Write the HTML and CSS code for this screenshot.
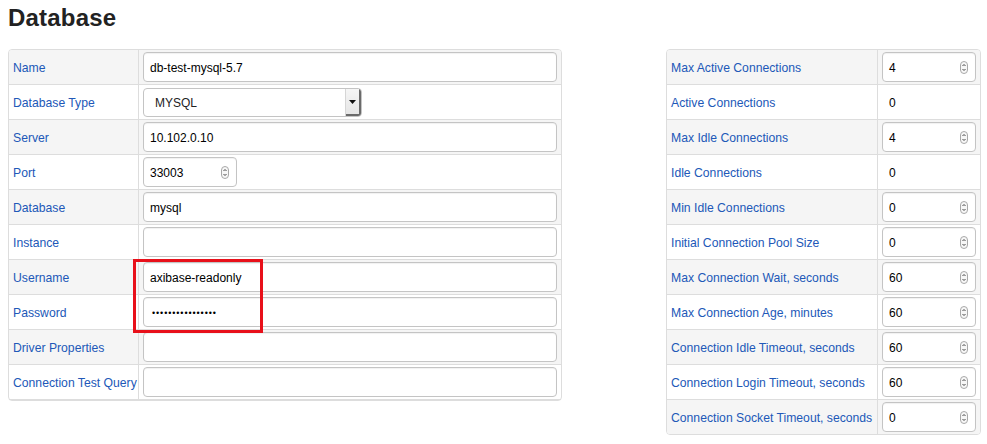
FILE: index.html
```html
<!DOCTYPE html>
<html>
<head>
<meta charset="utf-8">
<link rel="stylesheet" href="styles.css">
</head>
<body>
<h1 class="title">Database</h1>
<div class="panels">
  <div class="table table-left">
    <div class="row"><div class="label">Name</div><div class="cell"><div class="field">db-test-mysql-5.7</div></div></div>
    <div class="row"><div class="label">Database Type</div><div class="cell"><div class="select"><span class="select-text">MYSQL</span><span class="select-btn"><svg width="7" height="4" viewBox="0 0 7 4"><path d="M0 0H7L3.5 4Z" fill="#111"/></svg></span></div></div></div>
    <div class="row"><div class="label">Server</div><div class="cell"><div class="field">10.102.0.10</div></div></div>
    <div class="row"><div class="label">Port</div><div class="cell"><div class="field field-num"><span>33003</span><svg class="spin" width="8" height="13" viewBox="0 0 8 13"><rect x="0.5" y="0.5" width="7" height="12" rx="3.5" fill="#f7f7f7" stroke="#a8a8a8"/><path d="M2.5 5L4 3.5L5.5 5M2.5 8L4 9.5L5.5 8" fill="none" stroke="#444" stroke-width="1"/></svg></div></div></div>
    <div class="row"><div class="label">Database</div><div class="cell"><div class="field">mysql</div></div></div>
    <div class="row"><div class="label">Instance</div><div class="cell"><div class="field"></div></div></div>
    <div class="row"><div class="label">Username</div><div class="cell"><div class="field">axibase-readonly</div></div></div>
    <div class="row"><div class="label">Password</div><div class="cell"><div class="field field-pass">••••••••••••••••</div></div></div>
    <div class="row"><div class="label">Driver Properties</div><div class="cell"><div class="field"></div></div></div>
    <div class="row"><div class="label">Connection Test Query</div><div class="cell"><div class="field"></div></div></div>
    <div class="highlight"></div>
  </div>
  <div class="table table-right">
    <div class="row"><div class="label">Max Active Connections</div><div class="cell"><div class="field field-num"><span>4</span><svg class="spin" width="8" height="13" viewBox="0 0 8 13"><rect x="0.5" y="0.5" width="7" height="12" rx="3.5" fill="#f7f7f7" stroke="#a8a8a8"/><path d="M2.5 5L4 3.5L5.5 5M2.5 8L4 9.5L5.5 8" fill="none" stroke="#444" stroke-width="1"/></svg></div></div></div>
    <div class="row"><div class="label">Active Connections</div><div class="cell"><span class="value">0</span></div></div>
    <div class="row"><div class="label">Max Idle Connections</div><div class="cell"><div class="field field-num"><span>4</span><svg class="spin" width="8" height="13" viewBox="0 0 8 13"><rect x="0.5" y="0.5" width="7" height="12" rx="3.5" fill="#f7f7f7" stroke="#a8a8a8"/><path d="M2.5 5L4 3.5L5.5 5M2.5 8L4 9.5L5.5 8" fill="none" stroke="#444" stroke-width="1"/></svg></div></div></div>
    <div class="row"><div class="label">Idle Connections</div><div class="cell"><span class="value">0</span></div></div>
    <div class="row"><div class="label">Min Idle Connections</div><div class="cell"><div class="field field-num"><span>0</span><svg class="spin" width="8" height="13" viewBox="0 0 8 13"><rect x="0.5" y="0.5" width="7" height="12" rx="3.5" fill="#f7f7f7" stroke="#a8a8a8"/><path d="M2.5 5L4 3.5L5.5 5M2.5 8L4 9.5L5.5 8" fill="none" stroke="#444" stroke-width="1"/></svg></div></div></div>
    <div class="row"><div class="label">Initial Connection Pool Size</div><div class="cell"><div class="field field-num"><span>0</span><svg class="spin" width="8" height="13" viewBox="0 0 8 13"><rect x="0.5" y="0.5" width="7" height="12" rx="3.5" fill="#f7f7f7" stroke="#a8a8a8"/><path d="M2.5 5L4 3.5L5.5 5M2.5 8L4 9.5L5.5 8" fill="none" stroke="#444" stroke-width="1"/></svg></div></div></div>
    <div class="row"><div class="label">Max Connection Wait, seconds</div><div class="cell"><div class="field field-num"><span>60</span><svg class="spin" width="8" height="13" viewBox="0 0 8 13"><rect x="0.5" y="0.5" width="7" height="12" rx="3.5" fill="#f7f7f7" stroke="#a8a8a8"/><path d="M2.5 5L4 3.5L5.5 5M2.5 8L4 9.5L5.5 8" fill="none" stroke="#444" stroke-width="1"/></svg></div></div></div>
    <div class="row"><div class="label">Max Connection Age, minutes</div><div class="cell"><div class="field field-num"><span>60</span><svg class="spin" width="8" height="13" viewBox="0 0 8 13"><rect x="0.5" y="0.5" width="7" height="12" rx="3.5" fill="#f7f7f7" stroke="#a8a8a8"/><path d="M2.5 5L4 3.5L5.5 5M2.5 8L4 9.5L5.5 8" fill="none" stroke="#444" stroke-width="1"/></svg></div></div></div>
    <div class="row"><div class="label">Connection Idle Timeout, seconds</div><div class="cell"><div class="field field-num"><span>60</span><svg class="spin" width="8" height="13" viewBox="0 0 8 13"><rect x="0.5" y="0.5" width="7" height="12" rx="3.5" fill="#f7f7f7" stroke="#a8a8a8"/><path d="M2.5 5L4 3.5L5.5 5M2.5 8L4 9.5L5.5 8" fill="none" stroke="#444" stroke-width="1"/></svg></div></div></div>
    <div class="row"><div class="label">Connection Login Timeout, seconds</div><div class="cell"><div class="field field-num"><span>60</span><svg class="spin" width="8" height="13" viewBox="0 0 8 13"><rect x="0.5" y="0.5" width="7" height="12" rx="3.5" fill="#f7f7f7" stroke="#a8a8a8"/><path d="M2.5 5L4 3.5L5.5 5M2.5 8L4 9.5L5.5 8" fill="none" stroke="#444" stroke-width="1"/></svg></div></div></div>
    <div class="row"><div class="label">Connection Socket Timeout, seconds</div><div class="cell"><div class="field field-num"><span>0</span><svg class="spin" width="8" height="13" viewBox="0 0 8 13"><rect x="0.5" y="0.5" width="7" height="12" rx="3.5" fill="#f7f7f7" stroke="#a8a8a8"/><path d="M2.5 5L4 3.5L5.5 5M2.5 8L4 9.5L5.5 8" fill="none" stroke="#444" stroke-width="1"/></svg></div></div></div>
  </div>
</div>
</body>
</html>
```

FILE: styles.css
```css
* { box-sizing: border-box; }
html, body { margin: 0; background: #fff; }
body {
  padding: 4px 0 0 8px;
  font-family: "Liberation Sans", Arial, sans-serif;
  font-size: 12px;
  color: #000;
}
.title {
  margin: 0;
  font-size: 24px;
  line-height: 28px;
  font-weight: bold;
  color: #222;
  letter-spacing: 0.2px;
}
.panels {
  display: flex;
  align-items: flex-start;
  gap: 104px;
  margin-top: 17px;
}
.table {
  position: relative;
  flex: none;
  border: 1px solid #dddddd;
  border-radius: 4px;
}
.table-left { width: 554px; }
.table-right { width: 315px; }
.row {
  display: grid;
  height: 35px;
  border-bottom: 1px solid #dddddd;
}
.row:last-of-type { border-bottom: 0; height: 34px; }
.table-left .row { grid-template-columns: 130px 1fr; }
.table-right .row { grid-template-columns: 211px 1fr; }
.row:nth-child(odd) { background: #f5f5f5; }
.table .row:first-child { border-radius: 3px 3px 0 0; }
.table .row:last-of-type { border-radius: 0 0 3px 3px; }
.label {
  display: flex;
  align-items: center;
  padding: 2px 0 0 4px;
  border-right: 1px solid #dddddd;
  color: #2158b8;
  font-size: 12.2px;
  white-space: nowrap;
}
.cell {
  display: flex;
  align-items: center;
  padding: 0 4px;
}
.field {
  width: 100%;
  height: 30px;
  padding: 2px 6px 0;
  display: flex;
  align-items: center;
  background: #fff;
  border: 1px solid #c4c4c4;
  border-radius: 4px;
  box-shadow: inset 0 1px 1px rgba(0,0,0,0.06);
  color: #000;
  white-space: nowrap;
}
.field-num {
  width: 94px;
  justify-content: space-between;
  padding-right: 7px;
}
.field-pass {
  font-size: 9px;
  letter-spacing: 0.9px;
  padding-left: 8px;
}
.spin { display: block; margin-top: -2px; }
.value { padding: 2px 0 0 7px; }
.select {
  width: 219px;
  height: 29px;
  display: flex;
  align-items: stretch;
  background: #fff;
  border: 1px solid #c4c4c4;
  border-radius: 4px;
  overflow: hidden;
}
.select-text {
  flex: 1;
  display: flex;
  align-items: center;
  padding: 1px 0 0 11px;
  color: #222;
}
.select-btn {
  width: 16px;
  display: flex;
  align-items: center;
  justify-content: center;
  background: linear-gradient(#f6f6f6, #e4e4e4);
  border-left: 1px solid #d6d6d6;
  box-shadow: inset -2px -2px 0 #6a6a6a;
  padding-right: 2px;
}
.highlight {
  position: absolute;
  left: 124px;
  top: 209px;
  width: 130px;
  height: 74px;
  border: 3px solid #e8101a;
}
```
